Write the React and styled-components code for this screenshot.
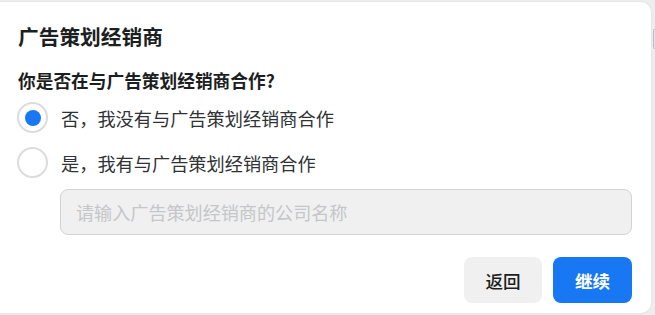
import React, { useState } from "react";
import styled, { createGlobalStyle } from "styled-components";

const Global = createGlobalStyle`
  html, body {
    margin: 0;
    padding: 0;
    background: #ededed;
    overflow: hidden;
  }
  body {
    font-family: "Noto Sans CJK SC", "Noto Sans", "Liberation Sans", sans-serif;
    color: #1c1e21;
  }
`;

const Page = styled.div`
  display: flex;
  align-items: flex-start;
  width: 655px;
  height: 315px;
  padding-top: 2px;
  box-sizing: border-box;
`;

const Card = styled.div`
  flex: 0 0 651px;
  height: 311px;
  box-sizing: border-box;
  background: #ffffff;
  border-radius: 0 10px 10px 0;
  box-shadow: 0 0 0 1px #e6e6e6;
  padding: 22px 19px 10px 18px;
  display: flex;
  flex-direction: column;
`;

const SideTab = styled.div`
  flex: 0 0 auto;
  margin-top: 26px;
  margin-left: 2px;
  width: 8px;
  height: 20px;
  border-radius: 4px 0 0 4px;
  background: #e4e6eb;
  border: 1px solid #b9bdc3;
  border-right: none;
`;

const Title = styled.h2`
  margin: 0;
  font-size: 20.7px;
  line-height: 24px;
  font-weight: 700;
  color: #1c1e21;
`;

const Question = styled.div`
  margin-top: 20px;
  font-size: 17.7px;
  line-height: 24px;
  font-weight: 700;
  color: #1c1e21;
`;

const Options = styled.div`
  margin-top: 10px;
  display: flex;
  flex-direction: column;
  gap: 14px;
`;

const OptionRow = styled.label`
  display: flex;
  align-items: center;
  gap: 13px;
  height: 31px;
  cursor: pointer;
`;

const RadioCircle = styled.span`
  box-sizing: border-box;
  width: 31px;
  height: 31px;
  margin-left: -1px;
  border-radius: 50%;
  border: 2px solid #dcdcdc;
  background: #ffffff;
  display: flex;
  align-items: center;
  justify-content: center;

  &::after {
    content: "";
    width: 16px;
    height: 16px;
    border-radius: 50%;
    background: ${(p) => (p.$checked ? "#1877f2" : "transparent")};
  }
`;

const OptionText = styled.span`
  font-size: 18.2px;
  line-height: 24px;
  color: #303236;
`;

const Input = styled.input`
  margin: 11px 0 0 42px;
  height: 47px;
  box-sizing: border-box;
  border: 1px solid #d3d3d3;
  border-radius: 8px;
  background: #f0f0f0;
  padding: 0 15px;
  font-family: inherit;
  font-size: 18.1px;
  color: #1c1e21;
  outline: none;

  &::placeholder {
    color: #c4c6c9;
  }
`;

const Footer = styled.div`
  margin-top: 22px;
  display: flex;
  justify-content: flex-end;
  gap: 11px;
`;

const Button = styled.button`
  height: 46px;
  width: ${(p) => (p.$primary ? "79px" : "78px")};
  border: none;
  border-radius: 8px;
  font-family: inherit;
  font-size: 17.6px;
  font-weight: ${(p) => (p.$primary ? 700 : 500)};
  background: ${(p) => (p.$primary ? "#1877f2" : "#f0f0f0")};
  color: ${(p) => (p.$primary ? "#ffffff" : "#1c1e21")};
  cursor: pointer;
  padding: 0;
`;

export default function App() {
  const [choice, setChoice] = useState("no");
  const options = [
    { id: "no", label: "否，我没有与广告策划经销商合作" },
    { id: "yes", label: "是，我有与广告策划经销商合作" },
  ];
  return (
    <>
      <Global />
      <Page>
        <Card>
          <Title>广告策划经销商</Title>
          <Question>你是否在与广告策划经销商合作?</Question>
          <Options>
            {options.map((o) => (
              <OptionRow key={o.id} onClick={() => setChoice(o.id)}>
                <RadioCircle $checked={choice === o.id} />
                <OptionText>{o.label}</OptionText>
              </OptionRow>
            ))}
          </Options>
          <Input placeholder="请输入广告策划经销商的公司名称" disabled={choice !== "yes"} />
          <Footer>
            <Button>返回</Button>
            <Button $primary>继续</Button>
          </Footer>
        </Card>
        <SideTab />
      </Page>
    </>
  );
}
